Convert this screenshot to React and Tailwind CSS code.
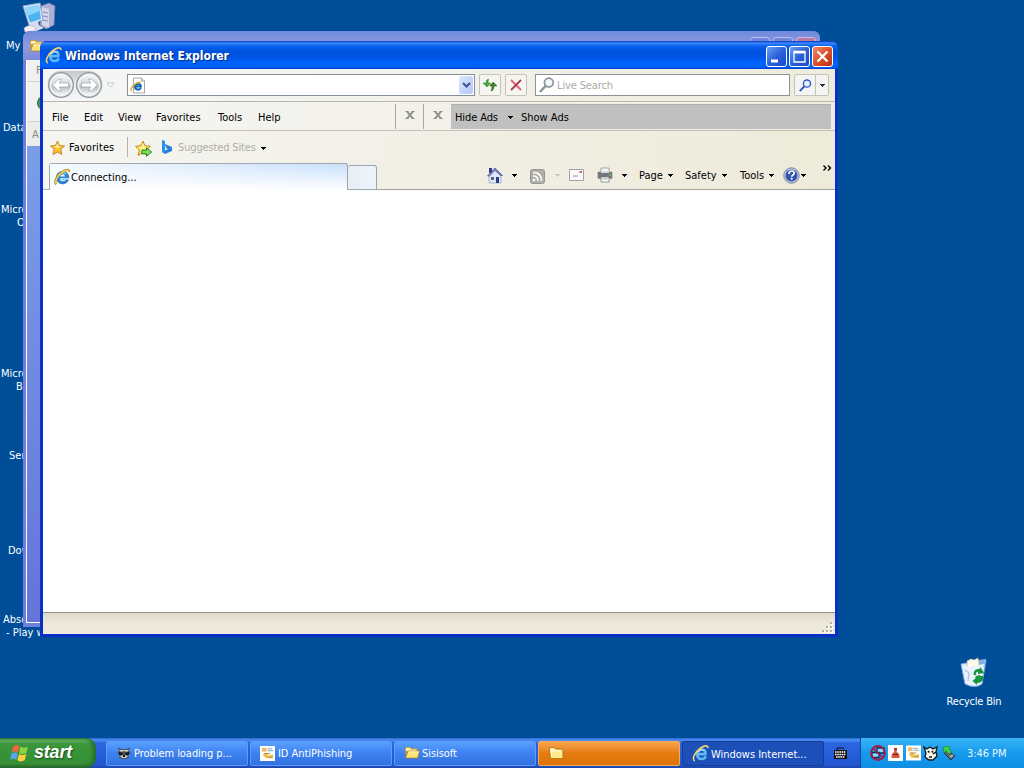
import React from 'react';

function IeLogo({ className }) {
  return (
    <svg className={className} viewBox="0 0 16 16" fill="none">
      <circle cx="8.6" cy="8.6" r="6.3" fill="#2a86d6" stroke="#1a5ea8" strokeWidth=".6" />
      <path d="M4.400 7C5.500 3.800 9.500 3 12 5" stroke="#8fdcff" strokeWidth="1.300" />
      <path d="M6.300 7.400h4.700c-.4-2.400-4.200-2.500-4.700 0z" fill="#fff" />
      <path d="M6.200 9.900h8.800M6.300 10c.8 2.300 3.500 2.200 5 .9" stroke="#e4f5ff" strokeWidth="1.100" />
      <path d="M2.400 15.200C-.2 13.400 2.600 7 7.600 3.300 11.200.7 15.200-.4 15 3" stroke="#9a7a1c" strokeWidth="2.200" />
      <path d="M2.400 14.700C.3 12.900 3.200 7 7.900 3.400 11.200 1 14.600 0 14.700 2.700" stroke="#ffd94d" strokeWidth="1.400" />
    </svg>
  );
}

function TitleLogo({ className }) {
  return (
    <svg className={className} viewBox="0 0 16 16" fill="none">
      <path d="M13 10.600c-1.400 3.600-7.800 3.700-8.100-1.400C4.700 5.200 8 3.600 10.500 4.500c2 .7 2.300 2.600 2 4.100H5.200" stroke="#5fb9f2" strokeWidth="2.400" />
      <path d="M6 6.500c1.300-2 3.500-2.300 5-1.500" stroke="#c4ecff" strokeWidth="1" />
      <path d="M2.600 15C-.4 13.400 2.500 7 7.500 3.300 11.200.6 15.300-.4 15 3" stroke="#f3d36c" strokeWidth="1.500" />
    </svg>
  );
}

function Folder({ className }) {
  return (
    <svg className={className} viewBox="0 0 16 16">
      <path d="M1 3.500 2 2h4l1.500 1.500h6V13H2z" fill="#d89b22" />
      <path d="M2 3h4l1 1.500h5.500V6H2z" fill="#fff6b5" />
      <path d="M1.500 13 4 6h11.500L13.700 13z" fill="#ffe27a" stroke="#a97817" strokeWidth=".7" />
      <path d="M4.500 7h10" stroke="#fffbd0" />
    </svg>
  );
}

function OpenFolder({ className }) {
  return (
    <svg className={className} viewBox="0 0 16 16">
      <path d="M1.500 2.500h5l1 1.500h6L15 5.500V13.500H3z" fill="#ffe78e" stroke="#a86f0c" strokeWidth=".8" />
      <path d="M2 3.500h4l1.200 2h5.500v7H3z" fill="#fff8c8" />
      <path d="M4 6.500h8.500V13H4z" fill="#ffe78a" />
    </svg>
  );
}

function Star({ className, arrow }) {
  return (
    <svg className={className} viewBox="0 0 16 16">
      <path d="m7.500 1 1.900 4.400 5.100.6-3.800 3.300 1.300 5.200-4.500-2.600L3 14.500l1.100-5.200L.5 6l5-.6z" fill={arrow ? '#ffe968' : '#ffc02c'} stroke="#bd8016" strokeWidth=".9" />
      <path d="m7.500 3 1 3.200 3 .4-4 1.400-4-1.200L6.300 6z" fill="#fff1a5" />
      {arrow && <path d="M6.500 9.500h4.300V7.300l4.900 4-4.900 4V13H6.500z" fill="#7cdd5c" stroke="#217b24" strokeWidth=".9" />}
    </svg>
  );
}

function Caret({ className = 'text-black' }) {
  return (
    <svg className={`w-[5px] h-[3px] shrink-0 ${className}`} viewBox="0 0 5 3" shapeRendering="crispEdges">
      <path d="M0 0h5v1H4v1H3v1H2V2H1V1H0z" fill="currentColor" />
    </svg>
  );
}

function NavButton({ flip }) {
  return (
    <svg className="w-[28px] h-[28px] shrink-0" viewBox="0 0 28 28">
      <defs>
        <linearGradient id="nav" x2="0" y2="1">
          <stop offset="0" stopColor="#f6f7f8" />
          <stop offset=".48" stopColor="#d3d8da" />
          <stop offset=".55" stopColor="#b4bcbf" />
          <stop offset="1" stopColor="#f8fafa" />
        </linearGradient>
      </defs>
      <circle cx="14" cy="14" r="12.300" fill="#e6e9ea" stroke="#8f979c" strokeWidth="1.300" />
      <circle cx="14" cy="14" r="10.500" fill="url(#nav)" stroke="#f8f8f8" />
      <path
        d="M5.500 14 11.500 8.200h3L12.200 12H21.500v4h-9.300l2.300 3.800h-3z"
        fill="#fff"
        stroke="#9ba2a6"
        strokeWidth=".7"
        transform={flip ? 'translate(28 0) scale(-1 1)' : undefined}
      />
    </svg>
  );
}

function Magnifier({ className, color, lens }) {
  return (
    <svg className={className} viewBox="0 0 16 16" fill="none">
      <path d="m1 15 5.500-6" stroke={color} strokeWidth="2.400" />
      <circle cx="9.800" cy="5.600" r="4.400" fill={lens} stroke={color} strokeWidth="1.700" />
    </svg>
  );
}

function ComputerIcon() {
  return (
    <svg className="absolute left-[22px] top-[2px] w-[34px] h-[31px]" viewBox="0 0 34 31">
      <path d="m19 4 8-3 6 3-1 19-8 4-6-4z" fill="#aeb0d6" stroke="#7377ad" strokeWidth=".7" />
      <path d="m20 5 7 2v19l-7-3z" fill="#d3d3ea" />
      <path d="m21 10 5 1m-5 3 5 1m-5 3 5 1" stroke="#8a8db5" />
      <path d="m1 4 17-3 3 17-14 5z" fill="#dfe9fb" stroke="#8fa5cb" />
      <path d="m3 5.500 14-2.500 2 14-11 3.500z" fill="#4cb4f2" />
      <path d="m3 5.500 14-2.500 1 6L5 14z" fill="#8bd5fd" />
      <path d="m8 22 8-3 1 4 5 3-10 4-9-2z" fill="#d9d9ef" />
      <path d="M2 26q6-5 12 0l-2 4H3z" fill="#f4eff5" stroke="#b2aac5" strokeWidth=".6" />
    </svg>
  );
}

function RecycleIcon() {
  return (
    <svg className="w-[32px] h-[32px]" viewBox="0 0 32 32">
      <path d="m3 7 25-4-4 24q-7 5-17 0z" fill="#d4e7fa" stroke="#8db4df" strokeWidth=".8" />
      <path d="m20 3 8-1-2 8-7-1z" fill="#88aee2" />
      <path d="m9 4 4-2 3 1 4-2 1 8-11 2z" fill="#fff9e8" stroke="#d8c8a3" strokeWidth=".5" />
      <path d="m4 8 8 2 14-3-3 19q-7 4-15 0z" fill="#e9f3fd" />
      <path d="m7 13 4 3-1 8" stroke="#bcc4e8" strokeWidth="1.500" fill="none" />
      <path d="M15.500 18q0-7 6-6l1-2 3.500 6-6 1v-2q-2-1-2 3zm10 1q0 7-6.500 7v2l-4.500-4 4.500-4v2q3 0 3-3zm-8 0 5-1-1 3-4 2z" fill="#18943a" />
    </svg>
  );
}

function DesktopLabel({ className, children }) {
  return <div className={`absolute whitespace-pre text-white text-[11px] leading-[13px] ${className}`}>{children}</div>;
}

function CaptionButton({ close, children }) {
  const color = close ? 'from-[#f08868] via-[#dc502b] to-[#bb3110]' : 'from-[#6c9df3] via-[#2a61db] to-[#184bc4]';
  return (
    <div className={`w-[21px] h-[21px] shrink-0 rounded-[3px] border border-white bg-linear-to-br ${color}`}>
      <svg className="w-full h-full" viewBox="0 0 19 19" fill="none" stroke="#fff">{children}</svg>
    </div>
  );
}

function TitleBar() {
  return (
    <div className="h-[28px] shrink-0 pl-[5px] pr-[6px] flex items-center rounded-t-[6px] bg-[linear-gradient(180deg,#0831b8_0px,#3c8cff_2px,#0a62ed_5px,#0053dd_10px,#0054e5_16px,#0065ff_22px,#0060f8_26px,#003dcc_28px)]">
      <TitleLogo className="w-[17px] h-[17px] mr-[3px] mt-[1px] shrink-0" />
      <span className="grow text-[12px] font-bold text-white leading-[16px] tracking-[0.03px] mt-[2px] [text-shadow:1px_1px_1px_#062b82]">Windows Internet Explorer</span>
      <div className="flex gap-[2px] mt-[2px] -mr-[1px]">
        <CaptionButton><path d="M4 14h7" strokeWidth="3" /></CaptionButton>
        <CaptionButton><path d="M4 5.500h11V15H4z" strokeWidth="1.300" /><path d="M3.500 5h12" strokeWidth="2.500" /></CaptionButton>
        <CaptionButton close><path d="m4.500 4.500 10 10m0-10-10 10" strokeWidth="2.300" /></CaptionButton>
      </div>
    </div>
  );
}

function AddressRow() {
  return (
    <div className="h-[33px] shrink-0 flex items-center pl-[4px] border-b border-[#b9b7a9] bg-linear-to-r from-[#f5f6f7] to-[#efecdd]">
      <div className="flex rounded-[14px] bg-linear-to-b from-[#c3c8cb] via-[#e9ebec] to-[#f3f4f5]">
        <NavButton />
        <NavButton flip />
      </div>
      <svg className="w-[9px] h-[6px] ml-[3px] mr-[12px] shrink-0" viewBox="0 0 9 6">
        <path d="M1 1h7L4.500 5z" fill="#fff" stroke="#c4c6c7" />
      </svg>
      <div className="w-[348px] h-[22px] shrink-0 border border-[#85909d] bg-white flex items-center justify-between pl-[2px] pr-px">
        <svg className="w-[15px] h-[17px]" viewBox="0 0 15 17">
          <path d="M3.500 1h8l3 3v12h-11z" fill="#fff" stroke="#a7a7a7" />
          <path d="M11.500 1v3h3" fill="#ddd" stroke="#a7a7a7" />
          <path d="M10.800 10.800c-1.300 2.900-6 2.200-5.800-1.300C5.200 6.400 10.600 5.700 11 9.500H5.500" fill="none" stroke="#1769b5" strokeWidth="2" />
          <path d="M1.500 14.500C-.3 11 4.500 5.600 10.500 5" fill="none" stroke="#e5aa20" strokeWidth="1.400" />
        </svg>
        <div className="w-[14px] h-[18px] rounded-[2px] bg-linear-to-br from-[#dce6ff] to-[#b3c7f5] flex items-center justify-center">
          <svg className="w-[9px] h-[6px]" viewBox="0 0 9 6"><path d="m1 1 3.500 3.500L8 1" fill="none" stroke="#3d5290" strokeWidth="2" /></svg>
        </div>
      </div>
      <div className="w-[22px] h-[22px] ml-[4px] shrink-0 rounded-[2px] border border-[#c4c3ba] bg-[#f6f5ef] flex items-center justify-center">
        <svg className="w-[16px] h-[16px]" viewBox="0 0 16 16">
          <path d="M6.500 2Q4 2.500 4 6H1l4 4 3.500-4H6q0-2 .5-4z" fill="#48ac36" stroke="#277321" strokeWidth=".5" />
          <path d="M9 14q3-.5 3-5h3l-3.800-4L7.500 9H10q0 3-1 5z" fill="#3c822c" stroke="#285f1b" strokeWidth=".5" />
        </svg>
      </div>
      <div className="w-[22px] h-[22px] ml-[4px] shrink-0 rounded-[2px] border border-[#c4c3ba] bg-[#f6f5ef] flex items-center justify-center">
        <svg className="w-[12px] h-[12px]" viewBox="0 0 12 12" fill="none">
          <path d="m1 1 10 10" stroke="#e0627a" strokeWidth="2" />
          <path d="M11 1 1 11" stroke="#a43a4e" strokeWidth="1.800" />
        </svg>
      </div>
      <div className="w-[255px] h-[22px] ml-[8px] shrink-0 border border-[#8b939c] bg-white flex items-center pl-[3px] text-[#aaa]">
        <Magnifier className="w-[16px] h-[18px] mr-[2px]" color="#8d9294" lens="#eefbfb" />
        <span className="-tracking-[0.13px] mt-[2px]">Live Search</span>
      </div>
      <div className="w-[35px] h-[22px] ml-[4px] shrink-0 rounded-[2px] border border-[#c4c3ba] bg-[#f4f4f2] flex">
        <div className="w-[21px] flex items-center justify-center border-r border-[#c4c3ba]">
          <Magnifier className="w-[13px] h-[13px]" color="#3156c5" lens="#e9f1ff" />
        </div>
        <div className="w-[12px] flex items-center justify-center"><Caret className="text-[#273253]" /></div>
      </div>
    </div>
  );
}

function GreyX() {
  return (
    <svg className="w-[10px] h-[8px] mb-[2px]" viewBox="0 0 10 8" fill="none" stroke="#8b8b88">
      <path d="m2 .5 6 7m0-7-6 7" strokeWidth="1.900" />
      <path d="M.5.500h3m3 0h3M.5 7.500h3m3 0h3" strokeWidth="1" />
    </svg>
  );
}

function MenuRow() {
  return (
    <div className="h-[29px] shrink-0 flex items-center pl-[9px] border-b border-[#c3c1b4] bg-linear-to-r from-[#f5f5f4] to-[#f0ede0]">
      <div className="flex mt-[3px]">
        <span className="w-[32px]">File</span>
        <span className="w-[34px]">Edit</span>
        <span className="w-[38px]">View</span>
        <span className="w-[62px]">Favorites</span>
        <span className="w-[40px]">Tools</span>
        <span className="w-[137px]">Help</span>
      </div>
      <div className="w-[28px] h-[25px] border-l border-[#aaa99f] flex items-center justify-center"><GreyX /></div>
      <div className="w-[28px] h-[25px] border-l border-[#aaa99f] flex items-center justify-center"><GreyX /></div>
      <div className="w-[380px] h-[25px] mt-px bg-[#c0c0c0] border-t border-[#b1b0aa] flex items-center pl-[4px] pt-px">
        <span className="w-[53px] tracking-[-0.1px]">Hide Ads</span>
        <Caret />
        <span className="ml-[8px]">Show Ads</span>
      </div>
    </div>
  );
}

function FavoritesRow() {
  return (
    <div className="h-[32px] shrink-0 flex items-center pl-[7px] pt-[2px]">
      <Star className="w-[16px] h-[16px] shrink-0" />
      <span className="w-[58px] ml-[3px] tracking-[0.08px]">Favorites</span>
      <div className="w-px h-[20px] mb-[2px] bg-[#b3b2a8]" />
      <Star className="w-[17px] h-[17px] ml-[7px]" arrow />
      <svg className="w-[12px] h-[16px] ml-[9px] mb-[2px]" viewBox="0 0 12 16">
        <path d="m1 1 3 1v10L1 13z" fill="#2195ed" />
        <path d="m4 5 7 3v4l-7 3-3-2 6-3-2-1z" fill="#2a82df" />
      </svg>
      <span className="w-[83px] ml-[5px] text-[#b0aea4] -tracking-[0.14px]">Suggested Sites</span>
      <Caret />
    </div>
  );
}

function CommandBar() {
  return (
    <div className="h-full flex items-center grow border-b border-[#a1a19a] pl-[110px] pb-[2px]">
      <svg className="w-[16px] h-[17px] shrink-0" viewBox="0 0 16 17">
        <path d="M2 1h3v5H2z" fill="#34388d" />
        <path d="M2 8h12v8H2z" fill="#dee7fa" stroke="#8795b9" strokeWidth=".6" />
        <path d="m8 1 7.500 7.500h-2L8 4 2.500 9H.5z" fill="#7d86c4" stroke="#353d84" strokeWidth=".6" />
        <path d="m8 4 5 5H3z" fill="#dee7fa" />
        <path d="M9 10h3v6H9z" fill="#283f83" />
        <path d="M4 10h3v3H4z" fill="#59677f" />
      </svg>
      <span className="w-[9px]" /><Caret />
      <svg className="w-[15px] h-[15px] ml-[13px] mt-[2px] shrink-0" viewBox="0 0 15 15" fill="none">
        <rect x=".5" y=".5" width="14" height="14" rx="2" fill="#b0afaa" stroke="#97968f" />
        <path d="M3 7q5 0 5 5M3 3.500q8.500 0 8.500 8.500" stroke="#fff" strokeWidth="1.600" />
        <circle cx="4" cy="11" r="1.300" fill="#fff" />
      </svg>
      <Caret className="text-[#c9c7bd] ml-[10px]" />
      <svg className="w-[15px] h-[12px] ml-[9px] shrink-0" viewBox="0 0 15 12">
        <path d="M.5.500h14v11H.5z" fill="#fbfafa" stroke="#a2a0a0" />
        <path d="M10.500 2h2.500v2h-2.500z" fill="#c66a6b" />
        <path d="M4 7h5" stroke="#8c8fb0" />
      </svg>
      <svg className="w-[16px] h-[16px] ml-[13px] shrink-0" viewBox="0 0 16 16">
        <path d="M4 1h8v6H4z" fill="#f7f7f7" stroke="#a4a4a4" />
        <path d="M1 5h14v6.500H1z" fill="#70767a" stroke="#888" strokeWidth=".7" />
        <path d="M4 4h8v2H4z" fill="#dadada" />
        <path d="M4 10h8v5H4z" fill="#fff" stroke="#7f7f7f" strokeWidth=".8" />
        <path d="M5 12h6" stroke="#a5b2ba" />
        <path d="M12 8h2" stroke="#77d75a" />
      </svg>
      <span className="w-[9px]" /><Caret />
      <span className="w-[29px] ml-[12px] mt-px">Page</span><Caret />
      <span className="w-[37px] ml-[12px] mt-px">Safety</span><Caret />
      <span className="w-[29px] ml-[13px] mt-px">Tools</span><Caret />
      <svg className="w-[17px] h-[17px] ml-[9px] shrink-0" viewBox="0 0 17 17">
        <circle cx="8.500" cy="8.500" r="7.700" fill="#c1cae0" stroke="#7b84a4" />
        <circle cx="8.500" cy="8.500" r="6" fill="#3254b0" />
        <path d="M6 7q0-3 2.700-3 2.500 0 2.500 2.200c0 1.600-2.500 1.700-2.500 3.600m0 1v2" fill="none" stroke="#fff" strokeWidth="1.700" />
      </svg>
      <span className="w-px" /><Caret />
      <svg className="w-[9px] h-[6px] ml-[17px] mb-[14px] shrink-0" viewBox="0 0 9 6" fill="none" stroke="#000" strokeWidth="1.400">
        <path d="m.5.500 2.500 2.500L.5 5.500m4.500-5L7.500 3 5 5.500" />
      </svg>
    </div>
  );
}

function TabRow() {
  return (
    <div className="h-[27px] shrink-0 flex items-end">
      <div className="w-[6px] h-full shrink-0 border-b border-[#b3b7b8]" />
      <div className="w-[299px] h-[27px] shrink-0 rounded-t-[3px] border border-b-0 border-[#a0a8ad] bg-linear-to-b from-[#c8e0fb] to-white flex items-center">
        <div className="h-full grow flex items-center pl-[4px] bg-linear-to-r from-white/80 to-transparent">
          <IeLogo className="w-[16px] h-[16px] mr-px" />
          <span className="mt-px">Connecting...</span>
        </div>
      </div>
      <div className="w-[29px] h-[25px] shrink-0 rounded-t-[3px] border border-l-0 border-[#9ba7b0] bg-linear-to-r from-[#e8eef4] to-[#edf5fc]" />
      <CommandBar />
    </div>
  );
}

function Grip() {
  const dots = [[8, 0], [4, 4], [8, 4], [0, 8], [4, 8], [8, 8]];
  return (
    <svg className="w-[12px] h-[12px]" viewBox="0 0 12 12" shapeRendering="crispEdges">
      {dots.map(([x, y]) => (
        <g key={`${x}-${y}`}>
          <path d={`M${x + 1} ${y + 1}h2v2h-2z`} fill="#fff" />
          <path d={`M${x} ${y}h2v2h-2z`} fill="#b5b29f" />
        </g>
      ))}
    </svg>
  );
}

function BrowserWindow() {
  return (
    <div className="absolute left-[40px] top-[41px] w-[798px] h-[596px] flex flex-col rounded-t-[7px] bg-[#0831c9] overflow-hidden">
      <TitleBar />
      <div className="grow flex flex-col mx-[3px] mb-[3px] text-[11px] leading-[14px] text-black bg-linear-to-r from-[#f5f5f2] via-[#f1efe5] to-[#eeebda] overflow-hidden">
        <AddressRow />
        <MenuRow />
        <FavoritesRow />
        <TabRow />
        <div className="grow bg-white" />
        <div className="h-[22px] shrink-0 border-t border-[#8f8e88] bg-linear-to-b from-[#dedbcd] via-[#ece9d8] to-[#efecdf] flex items-end justify-end pr-px">
          <Grip />
        </div>
      </div>
    </div>
  );
}

function BackWindow() {
  return (
    <div className="absolute left-[23px] top-[31px] w-[797px] h-[596px] rounded-t-[7px] bg-[#6f7fdd] overflow-hidden">
      <div className="h-[29px] bg-linear-to-b from-[#6d8bdb] via-[#9199e0] to-[#7d8bdc] pl-[6px] pt-[7px] flex">
        <Folder className="w-[16px] h-[16px] shrink-0" />
        <div className="grow" />
        <div className="flex gap-[3px] pr-[4px] -mt-[1px]">
          <div className="w-[20px] h-[20px] rounded-[3px] border border-[#b9bdef] bg-[#7187dc]" />
          <div className="w-[20px] h-[20px] rounded-[3px] border border-[#b9bdef] bg-[#7187dc]" />
          <div className="w-[20px] h-[20px] rounded-[3px] border border-[#cfb9dd] bg-[#b67ba5]" />
        </div>
      </div>
      <div className="ml-[3px] h-[563px] border-l border-b border-white text-[11px] text-[#8c8c88] flex flex-col">
        <div className="h-[22px] bg-[#f1f1ef] border-b border-[#d4d4d0] pl-[9px] pt-[4px] leading-[14px]">F</div>
        <div className="h-[40px] bg-[#f1f1ef] border-b border-[#d4d4d0] pl-[10px] pt-[13px]">
          <div className="w-[16px] h-[16px] rounded-full bg-[#3c9a63] border border-[#28734a]" />
        </div>
        <div className="h-[24px] bg-[#ecece8] pl-[5px] pt-[6px] leading-[14px]">A</div>
        <div className="grow bg-linear-to-b from-[#7b9de8] to-[#6574d8]" />
      </div>
    </div>
  );
}

function Raccoon() {
  return (
    <svg className="w-[16px] h-[16px] shrink-0" viewBox="0 0 16 16">
      <path d="m2 2 3 2h6l3-2-1 4 2 2-3 2 1 3-3 1H6l-3-1 1-3-3-2 2-2z" fill="#4c5259" />
      <path d="M3 5h10l-2 2-3-1-3 1zM4 11l4-1 4 1-2 2H6z" fill="#c9cac6" />
      <path d="m3 7 4 1-1 2H3zm10 0L9 8l1 2h3zM7 10h2v2H7z" fill="#15191e" />
    </svg>
  );
}

function FormIcon({ className }) {
  return (
    <svg className={className} viewBox="0 0 16 16">
      <path d="M0 0h16v16H0z" fill="#fff" />
      <path d="M2 2h5v4H2z" fill="#ecb968" />
      <path d="M8 3h5M8 5h6" stroke="#7f9bbd" />
      <path d="m3 9 4-2 2 3 5-1v4H6z" fill="#e8c251" />
      <path d="M4 8h7M9 12h4" stroke="#b78546" />
    </svg>
  );
}

function TaskButton({ icon, label, variant }) {
  let look = 'bg-linear-to-b from-[#5aa0ff] via-[#3c81f0] to-[#3372df] border-[#5c9cf8]';
  if (variant === 'alert') look = 'bg-linear-to-b from-[#f6a44b] via-[#e57b0c] to-[#db7407] border-[#f5a95a]';
  if (variant === 'active') look = 'bg-[#1d4fb9] border-[#153d94]';
  return (
    <div className={`grow basis-0 h-[25px] rounded-[2px] border flex items-center pl-[9px] gap-[2px] whitespace-nowrap ${look}`}>
      {icon}
      <span className={variant === 'active' ? 'mt-[3px] -tracking-[0.02px]' : 'mt-px -tracking-[0.05px]'}>{label}</span>
    </div>
  );
}

function Tray() {
  return (
    <div className="w-[164px] h-full shrink-0 border-l border-[#0b4a9d] bg-linear-to-b from-[#37b5f4] via-[#149aee] to-[#0f8ee3] flex items-center pl-[9px]">
      <svg className="w-[16px] h-[16px] mr-[2px]" viewBox="0 0 16 16">
        <path d="M7 3h7v5H7zM2 7.500h7v5H2z" fill="#8dd6fa" stroke="#102a61" strokeWidth="1.300" />
        <circle cx="8" cy="8" r="7" fill="none" stroke="#a41c3d" strokeWidth="1.800" />
        <path d="m3 3 10 10" stroke="#a41c3d" strokeWidth="1.500" />
      </svg>
      <svg className="w-[15px] h-[16px] mr-[3px]" viewBox="0 0 15 16">
        <path d="M0 0h15v16H0z" fill="#fff" />
        <path d="M6 3h3v2.500L8.500 7q3.500 1 3 6h-8q-.5-5 3-6L6 5.500z" fill="#d2573c" />
        <path d="M5 9.500h5M6 4h3" stroke="#711f18" />
      </svg>
      <FormIcon className="w-[15px] h-[16px] mr-[2px]" />
      <svg className="w-[16px] h-[16px] mr-[3px]" viewBox="0 0 16 16">
        <path d="m1 2 3 2 3-2 3 2 4-2-1 5 1 4-4 4H6l-4-3 1-4z" fill="#f4f4ed" stroke="#17191b" strokeWidth="1.300" />
        <path d="m5 6 1.500 1.500M9 6l1 1.500M6 12h3m1-3 3-2" stroke="#111" strokeWidth="1.500" />
      </svg>
      <svg className="w-[15px] h-[15px]" viewBox="0 0 15 15">
        <path d="m5 4 8 6-4 4-7-7z" fill="#5a6670" stroke="#253342" />
        <path d="m1 1 7-1-1 3 3 3-3 2-3-3-2 2z" fill="#3bd245" stroke="#16783a" strokeWidth=".6" />
        <path d="m8 11 3-2" stroke="#c9d4d8" strokeWidth="1.500" />
      </svg>
      <span className="ml-[10px] mt-px text-[#e9f7ff] -tracking-[0.05px]">3:46 PM</span>
    </div>
  );
}

function Taskbar() {
  return (
    <div className="absolute left-0 bottom-0 w-full h-[30px] flex items-center text-white text-[11px] leading-[14px] bg-[linear-gradient(180deg,#2b65cf_0px,#4c8ff4_2px,#2c66df_5px,#2459d5_22px,#2457cf_27px,#1b44a8_30px)]">
      <div className="w-[96px] h-full shrink-0 mr-[10px] rounded-r-[10px] bg-[linear-gradient(180deg,#2d762f_0px,#68b568_2px,#3c963c_6px,#359237_20px,#398f36_26px,#25642a_30px)] shadow-[inset_-3px_0_4px_#246a2b] flex items-center pl-[10px]">
        <svg className="w-[20px] h-[20px]" viewBox="0 0 19 19">
          <path d="M3 3q3-2 6 0L7.500 9q-3-2-6 0z" fill="#f0653e" />
          <path d="M10 3.500q3 2 7 0L15.500 9.500q-4 2-7 0z" fill="#8bd445" />
          <path d="M1.500 10q3-2 6 0L6 16q-3-2-6 0z" fill="#58a4f2" />
          <path d="M8.500 10.500q3 2 7 0L14 16.500q-4 2-7 0z" fill="#ffd13c" />
        </svg>
        <span className="ml-[4px] mb-[2px] font-['Liberation_Sans',sans-serif] text-[18px] leading-[20px] italic font-bold tracking-[-0.2px] [text-shadow:1px_1px_2px_#174b1d]">start</span>
      </div>
      <div className="flex gap-[2px] w-[718px] mr-[10px] shrink-0">
        <TaskButton icon={<Raccoon />} label="Problem loading p..." />
        <TaskButton icon={<FormIcon className="w-[15px] h-[15px] mr-px shrink-0" />} label="ID AntiPhishing" />
        <TaskButton icon={<Folder className="w-[16px] h-[16px] shrink-0" />} label="Sisisoft" />
        <TaskButton icon={<OpenFolder className="w-[16px] h-[16px] shrink-0" />} variant="alert" />
        <TaskButton icon={<TitleLogo className="w-[17px] h-[17px] shrink-0" />} label="Windows Internet..." variant="active" />
      </div>
      <svg className="w-[13px] h-[12px] mr-[13px] shrink-0" viewBox="0 0 13 12">
        <path d="M3 3V1h7" fill="none" stroke="#111" />
        <path d="M0 3h13v9H0z" fill="#111" />
        <path d="M1 5h11M1 7.500h11M2 10h9" stroke="#fff" strokeWidth="1.500" strokeDasharray="1.600 .6" />
      </svg>
      <Tray />
    </div>
  );
}

export default function App() {
  return (
    <div className="relative w-[1024px] h-[768px] overflow-hidden bg-[#004e98] font-['DejaVu_Sans_Condensed','DejaVu_Sans',sans-serif] [font-stretch:condensed]">
      <ComputerIcon />
      <DesktopLabel className="left-[6px] top-[39px]">My</DesktopLabel>
      <DesktopLabel className="left-[3px] top-[121px]">Data</DesktopLabel>
      <DesktopLabel className="left-[1px] top-[203px]">Micro</DesktopLabel>
      <DesktopLabel className="left-[17px] top-[216px]">O</DesktopLabel>
      <DesktopLabel className="left-[1px] top-[367px]">Micro</DesktopLabel>
      <DesktopLabel className="left-[16px] top-[380px]">B</DesktopLabel>
      <DesktopLabel className="left-[9px] top-[449px]">Ser</DesktopLabel>
      <DesktopLabel className="left-[8px] top-[544px]">Dow</DesktopLabel>
      <DesktopLabel className="left-[3px] top-[613px]">Abso</DesktopLabel>
      <BackWindow />
      <DesktopLabel className="left-[6px] top-[626px]">- Play w</DesktopLabel>
      <BrowserWindow />
      <div className="absolute left-[934px] top-[657px] w-[80px] flex flex-col items-center gap-[6px] text-white text-[11px] leading-[13px]">
        <RecycleIcon />
        <span className="whitespace-nowrap -tracking-[0.2px]">Recycle Bin</span>
      </div>
      <Taskbar />
    </div>
  );
}
